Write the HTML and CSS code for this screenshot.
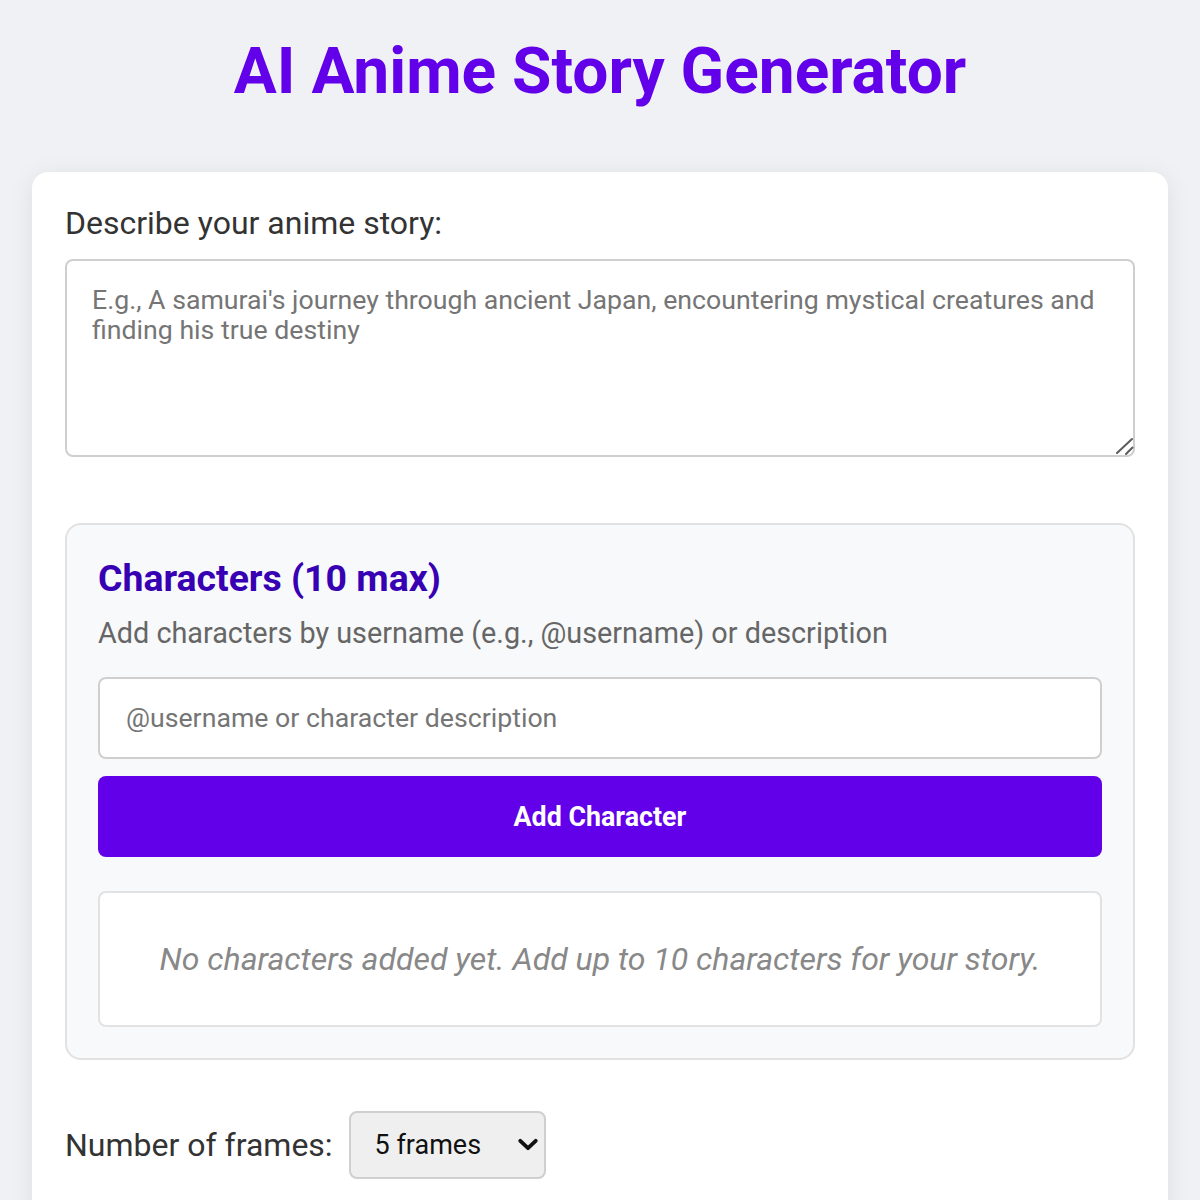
FILE: index.html
```html
<!DOCTYPE html>
<html lang="en">
<head>
<meta charset="utf-8">
<title>AI Anime Story Generator</title>
<link rel="stylesheet" href="styles.css">
</head>
<body>
<h1 class="title">AI Anime Story Generator</h1>
<main class="card">
  <label class="field-label" for="story">Describe your anime story:</label>
  <div class="story-wrap">
    <textarea id="story" class="story-input" placeholder="E.g., A samurai's journey through ancient Japan, encountering mystical creatures and finding his true destiny"></textarea>
    <svg class="resize-grip" width="20" height="20" viewBox="0 0 20 20" aria-hidden="true"><path d="M2 16 L17 2 M11 17 L17.5 10.5" fill="none" stroke="#5c5c5c" stroke-width="2" stroke-linecap="round"/></svg>
  </div>

  <section class="characters">
    <h3 class="characters-title">Characters (10 max)</h3>
    <p class="characters-hint">Add characters by username (e.g., @username) or description</p>
    <input class="character-input" type="text" placeholder="@username or character description">
    <button class="add-button" type="button">Add Character</button>
    <div class="character-list">
      <p class="empty-text">No characters added yet. Add up to 10 characters for your story.</p>
    </div>
  </section>

  <div class="frames-row">
    <label class="frames-label" for="frames">Number of frames:</label>
    <div class="select-wrap">
      <select id="frames" class="frames-select">
        <option>3 frames</option>
        <option selected>5 frames</option>
        <option>8 frames</option>
        <option>10 frames</option>
      </select>
      <svg class="chevron" width="20" height="14" viewBox="0 0 20 14" aria-hidden="true"><path d="M2.3 2.8 L10 10.2 L17.7 2.8" fill="none" stroke="#111" stroke-width="3.8" stroke-linecap="round" stroke-linejoin="round"/></svg>
    </div>
  </div>
</main>
</body>
</html>
```

FILE: styles.css
```css
* { box-sizing: border-box; }

html, body {
  margin: 0;
  background: #f0f1f5;
}

body {
  padding: 0 32px;
  font-family: Roboto, "Noto Sans", Arial, sans-serif;
  color: #333;
}

.title {
  margin: 34px 0 63px;
  text-align: center;
  font-size: 64px;
  font-weight: 700;
  color: #6200ea;
  line-height: normal;
}

.card {
  background: #fff;
  border-radius: 16px;
  padding: 32px 33px 60px;
  box-shadow: 0 4px 24px rgba(0, 0, 0, 0.08);
  min-height: 1100px;
}

.field-label {
  display: block;
  font-size: 32px;
  line-height: normal;
  color: #333;
  margin-bottom: 17px;
}

.story-wrap {
  position: relative;
  margin: 0 0 66px;
}

.story-input {
  display: block;
  width: 100%;
  height: 198px;
  padding: 24px 25px;
  border: 2px solid #cfcfcf;
  border-radius: 8px;
  font-family: Roboto, "Noto Sans", Arial, sans-serif;
  font-size: 26.7px;
  line-height: 30px;
  color: #333;
  resize: none;
  margin: 0;
  background: #fff;
}

.story-input::placeholder { color: #757575; }

.resize-grip {
  position: absolute;
  right: 0;
  bottom: 0;
  pointer-events: none;
}

.characters {
  background: #f8f9fa;
  border: 2px solid #e2e2e2;
  border-radius: 16px;
  padding: 31px 31px 31px;
}

.characters-title {
  margin: 0 0 16px;
  font-size: 37.4px;
  font-weight: 700;
  line-height: normal;
  color: #3700b3;
}

.characters-hint {
  margin: 0 0 27px;
  font-size: 28.8px;
  line-height: normal;
  color: #666;
}

.character-input {
  display: block;
  width: 100%;
  height: 82px;
  padding: 0 26px;
  border: 2px solid #cfcfcf;
  border-radius: 8px;
  background: #fff;
  font-family: Roboto, "Noto Sans", Arial, sans-serif;
  font-size: 26.7px;
  color: #333;
  margin-bottom: 17px;
}

.character-input::placeholder { color: #757575; }

.add-button {
  display: block;
  width: 100%;
  height: 81px;
  border: none;
  border-radius: 8px;
  background: #6200ea;
  color: #fff;
  font-family: Roboto, "Noto Sans", Arial, sans-serif;
  font-size: 26.8px;
  font-weight: 700;
  margin-bottom: 34px;
}

.character-list {
  background: #fff;
  border: 2px solid #e2e2e2;
  border-radius: 8px;
  height: 136px;
  display: flex;
  align-items: center;
  justify-content: center;
}

.empty-text {
  margin: 0;
  font-size: 32px;
  font-style: italic;
  color: #888;
  text-align: center;
}

.frames-row {
  display: flex;
  align-items: center;
  gap: 16px;
  margin-top: 51px;
}

.frames-label {
  font-size: 32px;
  color: #333;
}

.select-wrap {
  position: relative;
}

.frames-select {
  appearance: none;
  -webkit-appearance: none;
  width: 197px;
  height: 68px;
  padding: 0 24px 0 24px;
  border: 2px solid #cfcfcf;
  border-radius: 8px;
  background: #efefef;
  font-family: Roboto, "Noto Sans", Arial, sans-serif;
  font-size: 27px;
  color: #111;
}

.chevron {
  position: absolute;
  right: 8px;
  top: 27px;
  pointer-events: none;
}
```
